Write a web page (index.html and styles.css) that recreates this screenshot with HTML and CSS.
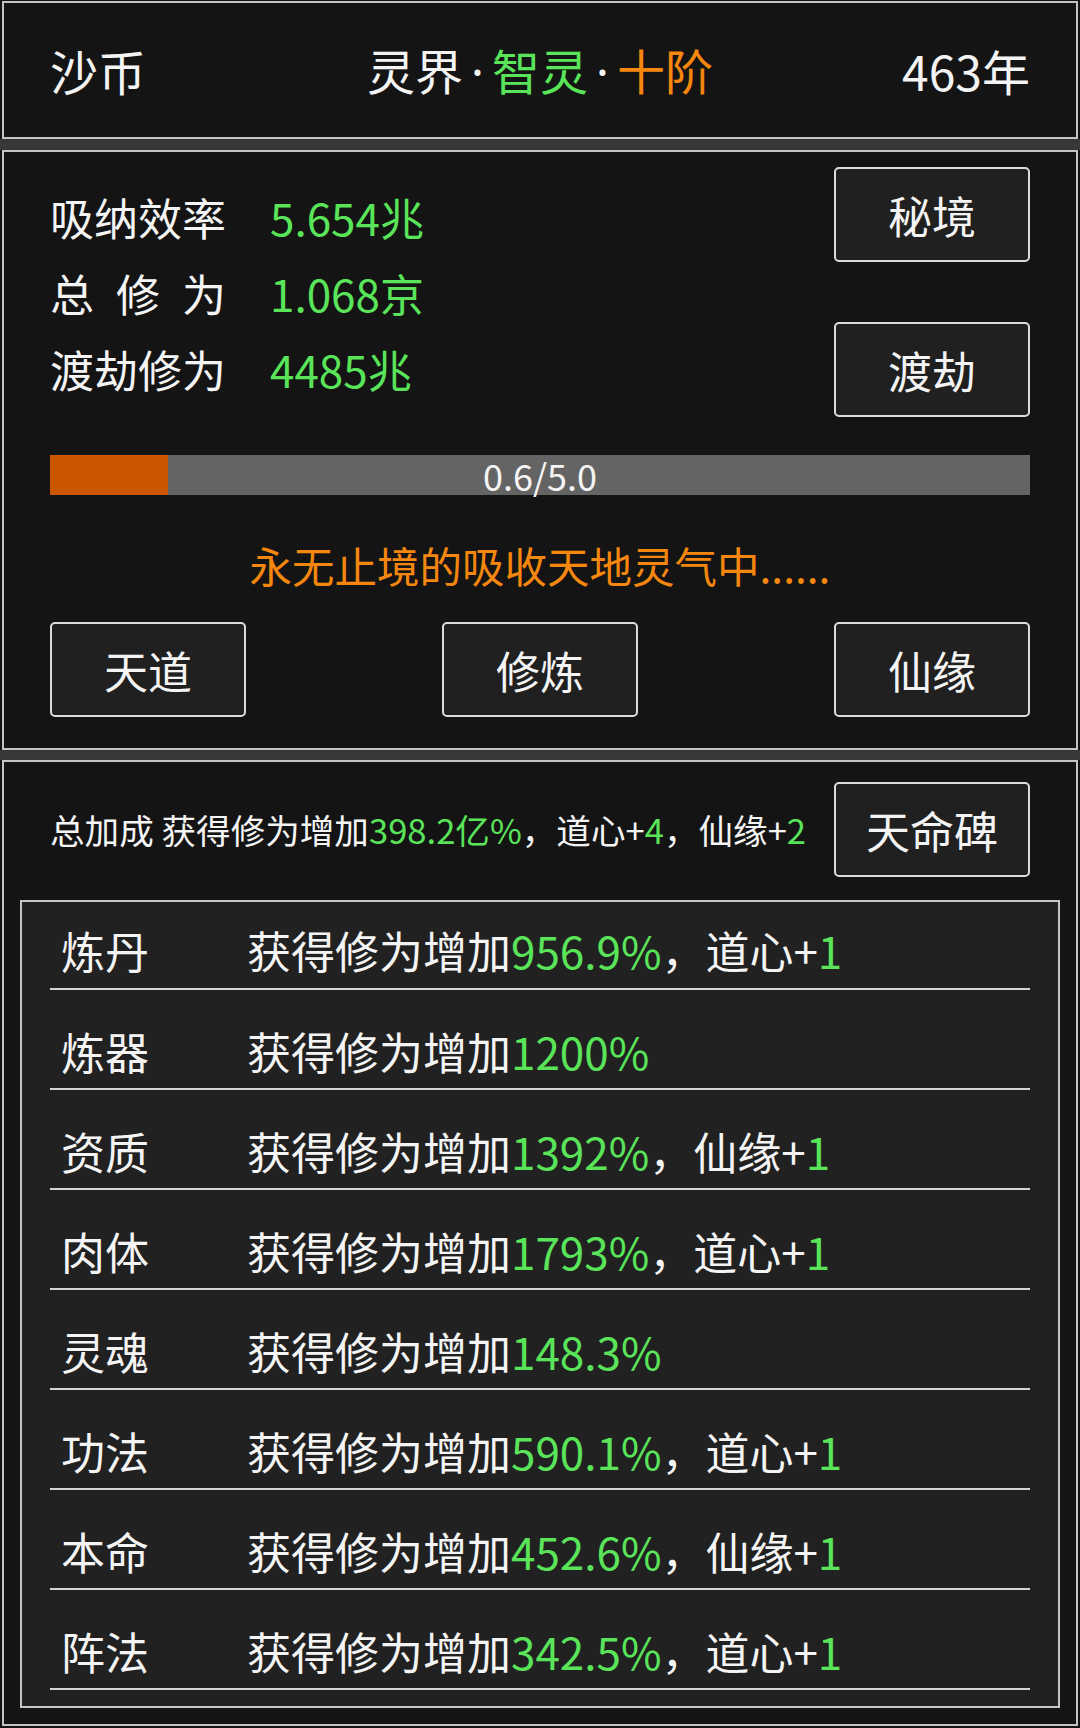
FILE: index.html
```html
<!DOCTYPE html>
<html lang="zh-CN">
<head>
<meta charset="utf-8">
<title>修仙</title>
<link rel="stylesheet" href="styles.css">
</head>
<body>
<div class="screen">
  <header class="panel top">
    <div class="top-left">沙币</div>
    <div class="top-center">灵界<span class="dot">·</span><span class="g">智灵</span><span class="dot">·</span><span class="o">十阶</span></div>
    <div class="top-right">463年</div>
  </header>
  <div class="sep sep1"></div>
  <section class="panel main">
    <div class="stats">
      <div class="stat-list">
        <div class="stat"><span class="label">吸纳效率</span><span class="g">5.654兆</span></div>
        <div class="stat"><span class="label"><span class="spread">总修为</span></span><span class="g">1.068京</span></div>
        <div class="stat"><span class="label">渡劫修为</span><span class="g">4485兆</span></div>
      </div>
      <div class="side-btns">
        <div class="btn">秘境</div>
        <div class="btn">渡劫</div>
      </div>
    </div>
    <div class="bar">
      <div class="fill" style="width:12%"></div>
      <span class="bar-text">0.6/5.0</span>
    </div>
    <p class="status">永无止境的吸收天地灵气中......</p>
    <div class="btn-row">
      <div class="btn">天道</div>
      <div class="btn">修炼</div>
      <div class="btn">仙缘</div>
    </div>
  </section>
  <div class="sep sep2"></div>
  <section class="panel bonus">
    <div class="summary">
      <p class="summary-text">总加成 获得修为增加<span class="g">398.2亿%</span>，道心+<span class="g">4</span>，仙缘+<span class="g">2</span></p>
      <div class="btn">天命碑</div>
    </div>
    <div class="table">
      <div class="row"><span class="name">炼丹</span><span>获得修为增加<span class="g">956.9%</span>，道心+<span class="g">1</span></span></div>
      <div class="row"><span class="name">炼器</span><span>获得修为增加<span class="g">1200%</span></span></div>
      <div class="row"><span class="name">资质</span><span>获得修为增加<span class="g">1392%</span>，仙缘+<span class="g">1</span></span></div>
      <div class="row"><span class="name">肉体</span><span>获得修为增加<span class="g">1793%</span>，道心+<span class="g">1</span></span></div>
      <div class="row"><span class="name">灵魂</span><span>获得修为增加<span class="g">148.3%</span></span></div>
      <div class="row"><span class="name">功法</span><span>获得修为增加<span class="g">590.1%</span>，道心+<span class="g">1</span></span></div>
      <div class="row"><span class="name">本命</span><span>获得修为增加<span class="g">452.6%</span>，仙缘+<span class="g">1</span></span></div>
      <div class="row"><span class="name">阵法</span><span>获得修为增加<span class="g">342.5%</span>，道心+<span class="g">1</span></span></div>
    </div>
  </section>
</div>
</body>
</html>
```
FILE: styles.css
```css
* { box-sizing: border-box; }
html, body {
  margin: 0;
  padding: 0;
  background: #141414;
}
body {
  width: 1080px;
  height: 1728px;
  overflow: hidden;
  font-family: "Noto Sans CJK SC", "Noto Sans", sans-serif;
  color: #f4f4f4;
  font-size: 44px;
}
p { margin: 0; }
.screen {
  padding-top: 1px;
}
.panel {
  margin: 0 2px;
  border: 2px solid #c4c4c4;
  background: #141414;
}
.sep { background: #383838; }
.sep1 { height: 11px; }
.sep2 { height: 10px; }

.g { color: #5ae45a; }
.o { color: #f5870f; }

/* top bar */
.top {
  height: 138px;
  display: grid;
  grid-template-columns: 1fr auto 1fr;
  align-items: center;
  padding: 0 46px 0 46px;
  font-size: 48px;
  line-height: 1;
}
.top-left { justify-self: start; }
.top-right { justify-self: end; }
.dot {
  font-family: "Noto Sans", "DejaVu Sans", sans-serif;
  padding: 0 8px;
}

/* main panel */
.main {
  height: 600px;
  padding: 15px 46px 0 46px;
}
.stats {
  display: flex;
  justify-content: space-between;
  height: 250px;
}
.stat-list {
  padding-top: 12px;
}
.stat {
  display: flex;
  height: 76px;
  line-height: 76px;
}
.label {
  width: 220px;
  display: inline-block;
}
.spread {
  display: inline-block;
  width: 176px;
  text-align: justify;
  text-align-last: justify;
}
.side-btns {
  display: flex;
  flex-direction: column;
  justify-content: space-between;
}
.btn {
  width: 196px;
  height: 95px;
  border: 2px solid #dcdcdc;
  border-radius: 5px;
  background: #202020;
  display: flex;
  align-items: center;
  justify-content: center;
  font-size: 44px;
  color: #f4f4f4;
}

.bar {
  position: relative;
  margin: 38px 0 0 0;
  height: 40px;
  background: #646464;
  display: flex;
  align-items: center;
  justify-content: center;
}
.fill {
  position: absolute;
  left: 0;
  top: 0;
  bottom: 0;
  background: #cc5500;
}
.bar-text {
  position: relative;
  font-size: 36px;
  line-height: 40px;
  color: #f4f4f4;
}
.status {
  margin-top: 40px;
  height: 60px;
  line-height: 60px;
  text-align: center;
  color: #f5870f;
  font-size: 42.5px;
}
.btn-row {
  margin-top: 27px;
  display: flex;
  justify-content: space-between;
}

/* bonus panel */
.bonus {
  height: 966px;
  padding: 20px 16px 0 16px;
}
.summary {
  display: flex;
  justify-content: space-between;
  align-items: center;
  padding: 0 30px 0 30px;
}
.summary-text {
  font-size: 34.6px;
  line-height: 1;
}
.table {
  margin-top: 23px;
  height: 808px;
  border: 2px solid #c4c4c4;
  background: #212121;
  padding: 0 28px;
}
.row {
  height: 100px;
  padding: 24px 0 0 11px;
  display: flex;
  align-items: center;
  border-bottom: 2px solid #d4d4d4;
  font-size: 44px;
  line-height: 60px;
  white-space: nowrap;
}
.row:first-child {
  height: 88px;
  padding-top: 10px;
}
.name {
  width: 186px;
  flex: none;
}
```
